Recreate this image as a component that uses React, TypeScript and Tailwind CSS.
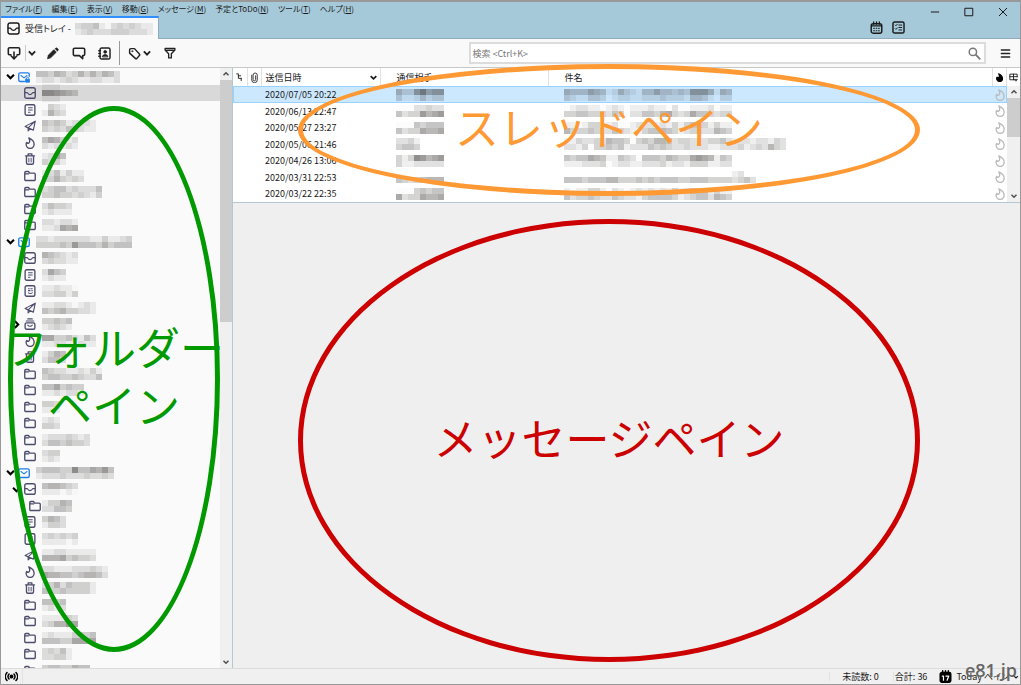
import type { ReactNode } from "react";

type IconName =
	| "account"
	| "lockedAccount"
	| "inbox"
	| "drafts"
	| "templates"
	| "sent"
	| "archive"
	| "junk"
	| "trash"
	| "folder";

interface FolderRow {
	icon: IconName;
	depth: number;
	twisty?: "open" | "closed";
	selected?: boolean;
	cells: string[];
}

interface MessageRow {
	date: string;
	sender: string[];
	subject: string[];
	selected?: boolean;
}

// Each digit is the darkness of one 6px block, dots are empty.
const folders: FolderRow[] = [
	{ icon: "lockedAccount", depth: 0, twisty: "open", cells: ["44354235353542", "12212321122112"] },
	{ icon: "inbox", depth: 1, selected: true, cells: ["111...", "776543", "111..."] },
	{ icon: "drafts", depth: 1, cells: [".321", "1532"] },
	{ icon: "sent", depth: 1, cells: ["434312221", "323243211"] },
	{ icon: "junk", depth: 1, cells: ["465312", "212121"] },
	{ icon: "trash", depth: 1, cells: ["1264", "3231"] },
	{ icon: "folder", depth: 1, cells: ["1241311", "3353232"] },
	{ icon: "folder", depth: 1, cells: ["2344232224", "3343323213"] },
	{ icon: "folder", depth: 1, cells: ["24332", "12111"] },
	{ icon: "folder", depth: 1, cells: ["221221", "112656"] },
	{ icon: "account", depth: 0, twisty: "open", cells: ["2212222221131123", "3333437444353444"] },
	{ icon: "inbox", depth: 1, cells: ["543212", "232211"] },
	{ icon: "drafts", depth: 1, cells: ["2643", "1211"] },
	{ icon: "templates", depth: 1, cells: ["112110", "223313"] },
	{ icon: "sent", depth: 1, cells: ["112210121", "434533221"] },
	{ icon: "archive", depth: 1, twisty: "closed", cells: ["33434", "12321"] },
	{ icon: "junk", depth: 1, cells: ["663342142", "112211211"] },
	{ icon: "trash", depth: 1, cells: ["1354", "2442"] },
	{ icon: "folder", depth: 1, cells: ["4322112131", "3443343224"] },
	{ icon: "folder", depth: 1, cells: ["4463433", "1121221"] },
	{ icon: "folder", depth: 1, cells: ["332", "111"] },
	{ icon: "folder", depth: 1, cells: ["121", "332"] },
	{ icon: "folder", depth: 1, cells: ["12223212", "24434332"] },
	{ icon: "folder", depth: 1, cells: ["233", "121"] },
	{ icon: "account", depth: 0, twisty: "open", cells: ["3444338446574", "1222322232232"] },
	{ icon: "inbox", depth: 1, twisty: "open", cells: ["455432", "111010"] },
	{ icon: "folder", depth: 2, cells: ["13354", "22443"] },
	{ icon: "drafts", depth: 1, cells: ["3542", "1332"] },
	{ icon: "templates", depth: 1, cells: ["232323", "111101"] },
	{ icon: "sent", depth: 1, cells: ["112211111", "555634332"] },
	{ icon: "junk", depth: 1, cells: ["22111222321", "65544345542"] },
	{ icon: "trash", depth: 1, cells: ["235243331", "433433331"] },
	{ icon: "folder", depth: 1, cells: ["4434", "1212"] },
	{ icon: "folder", depth: 1, cells: ["111132", "235576"] },
	{ icon: "folder", depth: 1, cells: ["121113334", "444336666"] },
	{ icon: "folder", depth: 1, cells: ["23241", "22331"] },
	{ icon: "folder", depth: 1, cells: ["34433544", "........"] },
];

const messages: MessageRow[] = [
	{
		date: "2020/07/05 20:22",
		selected: true,
		sender: ["53379677", "31124233"],
		subject: ["5444654125321446443437775154", "3211332012211222322214431022"],
	},
	{
		date: "2020/06/13 22:47",
		sender: ["00022322", "42337567"],
		subject: ["0122110121011121102001112011", "3344333243022443563236443233"],
	},
	{
		date: "2020/05/27 23:27",
		sender: ["00043444", "42336556"],
		subject: ["1101330120012221213134431311", "5333432243211344543123322543"],
	},
	{
		date: "2020/05/06 21:46",
		sender: ["2231....", "3443...."],
		subject: ["1132232544303435542332223342122122132", "2213033434122243432232221122231232532"],
	},
	{
		date: "2020/04/26 13:06",
		sender: ["31387567", "31122222"],
		subject: ["4344654114320444354336765143", "1112223012211222312213331122"],
	},
	{
		date: "2020/03/31 22:53",
		sender: ["........", "43234555"],
		subject: ["............................12..", "44434445533343434443344433332342"],
	},
	{
		date: "2020/03/22 22:35",
		sender: ["00034344", "62336556"],
		subject: ["1011331021012121213124441311", "4233432243221344443123442543"],
	},
];

const menus = [
	{ label: "ファイル", accessKey: "F" },
	{ label: "編集", accessKey: "E" },
	{ label: "表示", accessKey: "V" },
	{ label: "移動", accessKey: "G" },
	{ label: "メッセージ", accessKey: "M" },
	{ label: "予定とToDo", accessKey: "N" },
	{ label: "ツール", accessKey: "T" },
	{ label: "ヘルプ", accessKey: "H" },
];

const Svg = ({ className = "size-3", children }: { className?: string; children: ReactNode }) => (
	<svg
		viewBox="0 0 16 16"
		className={`shrink-0 ${className}`}
		fill="none"
		stroke="currentColor"
		strokeWidth="1.8"
		strokeLinecap="round"
		strokeLinejoin="round"
		aria-hidden="true"
	>
		{children}
	</svg>
);

const flamePath =
	"M6.500 1.200c3.500 1.600 7 4.800 7 8.600a5.300 5.300 0 0 1-10.700 0c0-1 .3-1.900.9-2.600.6 1.200 1.700 1.500 2.500 1C7.900 7 7.900 4.200 6.500 1.200z";

const iconShapes: Record<IconName, ReactNode> = {
	account: (
		<>
			<rect x="1" y="2.500" width="14" height="11.500" rx="2" />
			<path d="M4 6l4 3.200L12 6" strokeWidth="1.400" />
		</>
	),
	lockedAccount: (
		<>
			<path d="M8.500 14H3a2 2 0 0 1-2-2V4.500a2 2 0 0 1 2-2h10a2 2 0 0 1 2 2V7" />
			<path d="M4 6l4 3.200L12 6" strokeWidth="1.400" />
			<rect x="10" y="11" width="5.500" height="4" rx="0.500" fill="currentColor" strokeWidth="1" />
			<path d="M11.300 11V9.800a1.500 1.500 0 0 1 3 0V11" strokeWidth="1.200" />
		</>
	),
	inbox: (
		<>
			<rect x="1" y="1" width="14" height="14" rx="2.500" />
			<path d="M1.500 7.500H4c1.200 0 1 2.700 4 2.700s2.800-2.700 4-2.700h2.500" strokeWidth="1.500" />
		</>
	),
	drafts: (
		<>
			<rect x="1.500" y="1" width="13" height="14" rx="2" />
			<path d="M6 5h5M6 8h5M6 11h2" strokeWidth="1.400" />
		</>
	),
	templates: (
		<>
			<rect x="1.500" y="1" width="13" height="14" rx="2" />
			<path d="M6 5h1M9 5h2M6 7.500h2M10.500 7.500h.5M6 10.500c1.500 1 3.500 1 5 0" strokeWidth="1.400" />
		</>
	),
	sent: (
		<path
			d="M15 1.500L1.500 8.500 5.500 10.500 12.500 13.500zM5.500 10.500L15 1.500M5.500 10.500v4l3-2.700"
			strokeWidth="1.500"
		/>
	),
	archive: (
		<>
			<path d="M5 1.200h6M3 4h10" strokeWidth="1.500" />
			<rect x="1.500" y="6.500" width="13" height="8.500" rx="2" />
			<path d="M5 9.500c1.500 2 4.500 2 6 0" strokeWidth="1.500" />
		</>
	),
	junk: <path d={flamePath} />,
	trash: (
		<>
			<path d="M2 3.800h12M5.500 3.500V1.200h5v2.300M3.300 4v9a2 2 0 0 0 2 2h5.400a2 2 0 0 0 2-2V4" />
			<path d="M6.500 7v5M9.500 7v5" strokeWidth="1.300" />
		</>
	),
	folder: (
		<path d="M1 12.500V3.500a1.500 1.500 0 0 1 1.500-1.500H6l1.500 2.200h6A1.500 1.500 0 0 1 15 5.700v6.800a1.500 1.500 0 0 1-1.500 1.500h-11A1.500 1.500 0 0 1 1 12.500zM2 5.200h4" />
	),
};

const Chevron = ({ direction = "down", className }: { direction?: "down" | "up" | "right"; className?: string }) => {
	const paths = {
		down: "M3 5.500l5 5 5-5",
		up: "M3 10.500l5-5 5 5",
		right: "M5.500 3l5 5-5 5",
	};
	return (
		<Svg className={className}>
			<path d={paths[direction]} strokeWidth="3" strokeLinecap="butt" strokeLinejoin="miter" />
		</Svg>
	);
};

const Mosaic = ({ cells }: { cells: string[] }) => {
	const width = cells[0].length * 6;
	const height = cells.length * 6;
	return (
		<svg
			width={width}
			height={height}
			viewBox={`0 0 ${width} ${height}`}
			className="block shrink-0"
			shapeRendering="crispEdges"
			aria-hidden="true"
		>
			{cells.map((line, y) =>
				[...line].map((value, x) =>
					value === "." ? null : (
						<rect
							key={`${x}-${y}`}
							x={x * 6}
							y={y * 6}
							width="6"
							height="6"
							fill="#2c2a28"
							fillOpacity={Number(value) * 0.065 + 0.01}
						/>
					),
				),
			)}
		</svg>
	);
};

const ScrollBar = () => (
	<div className="flex min-h-0 flex-1 flex-col items-stretch bg-[#f0f0f0] text-[#505050]">
		<button aria-label="上へ" className="flex h-3 items-center justify-center">
			<Chevron direction="up" className="size-2" />
		</button>
		<div className="min-h-0 flex-1">
			<div className="h-[42%] bg-[#cdcdcd]" />
		</div>
		<button aria-label="下へ" className="flex h-3 items-center justify-center">
			<Chevron className="size-2" />
		</button>
	</div>
);

const TitleBar = () => (
	<header className="flex h-[37px] shrink-0 border-b border-[#8fabbb] bg-[#a6c9d9]">
		<div className="flex flex-1 flex-col justify-between">
			<nav className="flex h-[14px] items-center gap-[9px] pl-1 text-[8px] leading-none">
				{menus.map((menu) => (
					<button key={menu.label} className="whitespace-nowrap">
						{menu.label}(<u>{menu.accessKey}</u>)
					</button>
				))}
			</nav>
			<div className="-mb-px flex">
				<button className="flex h-[23px] w-[158px] items-center gap-1 border-t-2 border-r border-t-[#2f8fff] border-r-[#8fabbb] bg-[#f9f9fa] pl-[6px]">
					<Svg className="size-[13px]">
						<rect x="1.200" y="1.200" width="13.600" height="13.600" rx="2.500" />
						<path d="M1.500 7.500H4c1.200 0 1 2.700 4 2.700s2.800-2.700 4-2.700h2.500" strokeWidth="1.500" />
					</Svg>
					<span className="pl-px whitespace-nowrap">受信トレイ -</span>
					<Mosaic cells={["2334102323211", "1232223332221"]} />
				</button>
			</div>
		</div>
		<div className="mr-[13px] flex items-end gap-[9px] pb-1">
			<button aria-label="カレンダー">
				<Svg className="size-[13px]">
					<rect x="1.500" y="3.500" width="13" height="11.500" rx="2.500" />
					<path d="M4.500 1v3M8 1v3M11.500 1v3M2 6h12" strokeWidth="1.500" />
					<path d="M4.500 9h1M7.500 9h1M10.500 9h1M4.500 12h1M7.500 12h1M10.500 12h1" strokeWidth="1.300" />
				</Svg>
			</button>
			<button aria-label="ToDo">
				<Svg className="size-[13px]">
					<rect x="1.200" y="1.200" width="13.600" height="13.600" rx="2" />
					<path d="M4 5l.8.8L6.500 4M4 9.500l.8.800L6.500 8.500M8.500 5H12M8.500 8H12M8.500 11H12" strokeWidth="1.200" />
				</Svg>
			</button>
		</div>
		<div className="flex h-5">
			<button aria-label="最小化" className="flex w-[34px] items-center justify-center">
				<Svg className="size-[10px]">
					<path d="M2 8h12" strokeWidth="1.600" />
				</Svg>
			</button>
			<button aria-label="最大化" className="flex w-[34px] items-center justify-center">
				<Svg className="size-[10px]">
					<rect x="2" y="2" width="12" height="12" strokeWidth="1.600" />
				</Svg>
			</button>
			<button aria-label="閉じる" className="flex w-[34px] items-center justify-center">
				<Svg className="size-[10px]">
					<path d="M2 2l12 12M14 2L2 14" strokeWidth="1.600" />
				</Svg>
			</button>
		</div>
	</header>
);

const Toolbar = () => (
	<div className="flex h-[29px] shrink-0 items-center border-b border-[#c8c8c8] bg-[#f9f9fa] pl-[6px] text-[#222]">
		<button aria-label="受信" className="mr-1">
			<Svg className="size-[14px]">
				<path d="M4.500 10H3a1.500 1.500 0 0 1-1.500-1.500V3.500A1.500 1.500 0 0 1 3 2h10a1.500 1.500 0 0 1 1.500 1.500v5A1.500 1.500 0 0 1 13 10h-1.500M8 7v7M4.800 11.500L8 14.700l3.200-3.200" />
			</Svg>
		</button>
		<div className="h-4 border-l border-[#ccc]" />
		<button aria-label="受信メニュー" className="ml-px mr-[9px]">
			<Chevron className="size-[10px]" />
		</button>
		<button aria-label="作成" className="mr-[13px]">
			<Svg className="size-[13px]">
				<path d="M2 14l1-4 6.500-6.500 3 3L6 13z" fill="currentColor" strokeWidth="1" />
				<path d="M11 2.300l1-1a1.200 1.200 0 0 1 1.700 0l1.200 1.200a1.200 1.200 0 0 1 0 1.700l-1 1z" fill="currentColor" strokeWidth="0.500" />
			</Svg>
		</button>
		<button aria-label="チャット" className="mr-3">
			<Svg className="size-[14px]">
				<path d="M3 2.500h10A1.500 1.500 0 0 1 14.500 4v5.500A1.500 1.500 0 0 1 13 11h-.8v3.500L8.500 11H3a1.500 1.500 0 0 1-1.500-1.500V4A1.500 1.500 0 0 1 3 2.500z" />
			</Svg>
		</button>
		<button aria-label="アドレス帳" className="mr-2">
			<Svg className="size-[13px]">
				<rect x="2.500" y="1.200" width="12.300" height="13.600" rx="2" />
				<path d="M1 4.500h2M1 8h2M1 11.500h2" />
				<circle cx="8.800" cy="6" r="1.700" fill="currentColor" strokeWidth="1" />
				<path d="M5.500 11.800c0-3.500 6.600-3.500 6.600 0z" fill="currentColor" strokeWidth="1" />
			</Svg>
		</button>
		<div className="mr-2 h-6 border-l border-[#999]" />
		<button aria-label="タグ" className="mr-3 flex items-center gap-px">
			<Svg className="size-[13px]">
				<path d="M2 3.500A1.500 1.500 0 0 1 3.500 2H8l6 6.500a1.500 1.500 0 0 1 0 2L11 14a1.500 1.500 0 0 1-2 0L2 7.500z" />
				<circle cx="5.200" cy="5.200" r="0.700" strokeWidth="1" />
			</Svg>
			<Chevron className="size-[10px]" />
		</button>
		<button aria-label="クイックフィルター">
			<Svg className="size-3">
				<path d="M1.500 2h13v2L9.800 9v5.500H6.200V9L1.500 4zM3.500 4.500h9" />
			</Svg>
		</button>
		<div className="ml-auto flex h-[22px] w-[51%] items-center border-2 border-[#dcdcdc] bg-white pr-[3px]">
			<input
				type="search"
				aria-label="検索"
				placeholder="検索 <Ctrl+K>"
				className="min-w-0 flex-1 pl-px outline-none placeholder:text-[#777]"
			/>
			<Svg className="size-[13px] text-[#777]">
				<circle cx="6" cy="6" r="4.500" />
				<path d="M9.500 9.500l5 5" strokeWidth="2.200" />
			</Svg>
		</div>
		<button aria-label="メニュー" className="mr-[9px] ml-[14px]">
			<Svg className="size-[11px]">
				<path d="M2 3h12M2 8h12M2 13h12" strokeWidth="2.200" />
			</Svg>
		</button>
	</div>
);

const indents = ["pl-1", "pl-[10px]", "pl-[15px]"];

const Annotation = ({ className, children }: { className: string; children: ReactNode }) => (
	<div
		className={`pointer-events-none absolute z-10 flex items-center justify-center rounded-[50%] border-[5px] pb-2 text-center text-[44px] leading-[58px] whitespace-nowrap [font-feature-settings:normal] ${className}`}
	>
		<div>{children}</div>
	</div>
);

const FolderPane = () => (
	<aside className="relative flex w-[232px] shrink-0 border-r border-[#b4c8d4] bg-[#fafafa]">
		<ul className="min-w-0 flex-1 overflow-hidden">
			{folders.map((folder, index) => (
				<li
					key={index}
					className={`flex h-4 items-center odd:h-[17px] ${indents[folder.depth]} ${
						folder.selected ? "bg-[#d9d9d9]" : ""
					}`}
				>
					<span className="flex w-[13px] shrink-0 items-center text-black">
						{folder.twisty && (
							<button aria-label="開閉" className="block">
								<Chevron direction={folder.twisty === "open" ? "down" : "right"} className="size-[11px]" />
							</button>
						)}
					</span>
					<button
						aria-label={folder.icon}
						className={`flex items-center ${folder.depth === 2 ? "gap-px" : "gap-[6px]"} ${
							folder.depth === 0 ? "text-[#1f7fe8]" : "text-[#4c4c6d]"
						}`}
					>
						<Svg className="size-3">{iconShapes[folder.icon]}</Svg>
						<Mosaic cells={folder.cells} />
					</button>
				</li>
			))}
		</ul>
		<div className="flex w-3 shrink-0">
			<ScrollBar />
		</div>
		<Annotation className="top-[38px] right-3 bottom-4 left-[7px] border-[#009a00] text-[#009a00]">
			フォルダー
			<br />
			ペイン
		</Annotation>
	</aside>
);

const ThreadPane = () => (
	<section className="relative flex shrink-0 border-b border-[#b4c8d4] bg-white">
		<table className="min-w-0 flex-1 table-fixed border-collapse text-left">
			<colgroup>
				<col className="w-[14px]" />
				<col className="w-[14px]" />
				<col className="w-[119px]" />
				<col className="w-[168px]" />
				<col />
				<col className="w-[14px]" />
			</colgroup>
			<thead>
				<tr className="h-[18px] *:border-r *:border-[#e2e2e2] *:p-0 *:font-normal">
					<th aria-label="スレッド">
						<Svg className="mx-auto size-[9px]">
							<path d="M3 1.500h3v8h5M6 5h4M11 9.500v4" strokeWidth="1.600" />
						</Svg>
					</th>
					<th aria-label="添付">
						<Svg className="mx-auto size-[11px]">
							<path d="M4 4.500v7a4 4 0 0 0 8 0V4.500a3 3 0 0 0-6 0v6.500a1.800 1.800 0 0 0 3.600 0V5.500" strokeWidth="1.200" />
						</Svg>
					</th>
					<th>
						<button className="flex w-full items-center justify-between pr-[2px] pl-1">
							送信日時
							<Chevron className="size-[9px]" />
						</button>
					</th>
					<th>
						<button className="pl-4">通信相手</button>
					</th>
					<th>
						<button className="pl-4">件名</button>
					</th>
					<th aria-label="迷惑メール">
						<Svg className="mx-auto size-[9px] text-black">
							<path d={flamePath} fill="currentColor" />
						</Svg>
					</th>
				</tr>
			</thead>
			<tbody>
				{messages.map((message) => (
					<tr
						key={message.date}
						className={`h-4 odd:h-[17px] *:p-0 ${
							message.selected ? "bg-[#cce8ff] outline outline-1 -outline-offset-1 outline-[#99d1ff]" : ""
						}`}
					>
						<td />
						<td />
						<td className="whitespace-nowrap">
							<span className="block pl-1">{message.date}</span>
						</td>
						<td>
							<div className="pl-4">
								<Mosaic cells={message.sender} />
							</div>
						</td>
						<td>
							<div className="pl-4">
								<Mosaic cells={message.subject} />
							</div>
						</td>
						<td>
							<button aria-label="迷惑メール" className="mx-auto block text-[#bbb]">
								<Svg className="size-3">{iconShapes.junk}</Svg>
							</button>
						</td>
					</tr>
				))}
			</tbody>
		</table>
		<div className="flex w-[13px] shrink-0 flex-col">
			<button aria-label="列の選択" className="flex h-[18px] shrink-0 items-center justify-center">
				<Svg className="size-[9px]">
					<path d="M10 12H1.500V2h13v5M1.500 6.500h13M8 2v10" strokeWidth="1.600" strokeLinejoin="miter" />
					<path d="M9.500 11h6l-3 3.500z" fill="currentColor" strokeWidth="0.500" />
				</Svg>
			</button>
			<ScrollBar />
		</div>
		<Annotation className="-top-[4px] right-[100px] bottom-[6px] left-[65px] border-[#ff9933] text-[#ff9933]">
			スレッドペイン
		</Annotation>
	</section>
);

const MessagePane = () => (
	<section className="relative min-h-0 flex-1 bg-[#efefef]">
		<Annotation className="top-4 right-[100px] bottom-[6px] left-[65px] border-[#cc0000] text-[#cc0000]">
			メッセージペイン
		</Annotation>
	</section>
);

const StatusBar = () => (
	<footer className="relative flex h-4 shrink-0 items-center border-t border-[#dcdcdc] bg-[#f0f0f0]">
		<button aria-label="オンライン" className="pl-1">
			<Svg className="size-[13px] text-black">
				<circle cx="8" cy="8" r="1.500" fill="currentColor" />
				<path d="M5 5a4.500 4.500 0 0 0 0 6M11 5a4.500 4.500 0 0 1 0 6M2.500 3a7.500 7.500 0 0 0 0 10M13.500 3a7.500 7.500 0 0 1 0 10" />
			</Svg>
		</button>
		<div className="ml-1 h-full border-l border-[#e2e2e2]" />
		<span className="ml-auto border-l border-[#e2e2e2] pr-[14px] pl-3">未読数: 0</span>
		<span className="border-l border-[#e2e2e2] pr-3 pl-px">合計: 36</span>
		<button className="mr-px flex items-center gap-1 whitespace-nowrap">
			<Svg className="size-[13px] text-black">
				<rect x="1.500" y="3" width="13" height="12" rx="2" fill="currentColor" />
				<path d="M4.500 1v2M8 1v2M11.500 1v2" />
				<path d="M4 7.500h1.500v5M8.500 7.500h3.500L10 12.500" stroke="#fff" strokeWidth="1.500" />
			</Svg>
			Today ペイン
			<Chevron className="size-[6px]" />
		</button>
		<span className="absolute right-[3px] bottom-0 z-20 font-['Open_Sans',sans-serif] text-lg leading-7 font-semibold text-[#666]">
			e81.jp
		</span>
	</footer>
);

export default function App() {
	return (
		<div className="flex h-screen flex-col overflow-hidden border-t-2 border-r border-b border-l border-[#999] bg-[#f0f0f0] font-['Noto_Sans_CJK_JP',sans-serif] text-[9px] leading-none text-[#1a1a1a] [font-feature-settings:'palt']">
			<TitleBar />
			<Toolbar />
			<main className="flex min-h-0 flex-1">
				<FolderPane />
				<div className="flex min-w-0 flex-1 flex-col">
					<ThreadPane />
					<MessagePane />
				</div>
			</main>
			<StatusBar />
		</div>
	);
}
